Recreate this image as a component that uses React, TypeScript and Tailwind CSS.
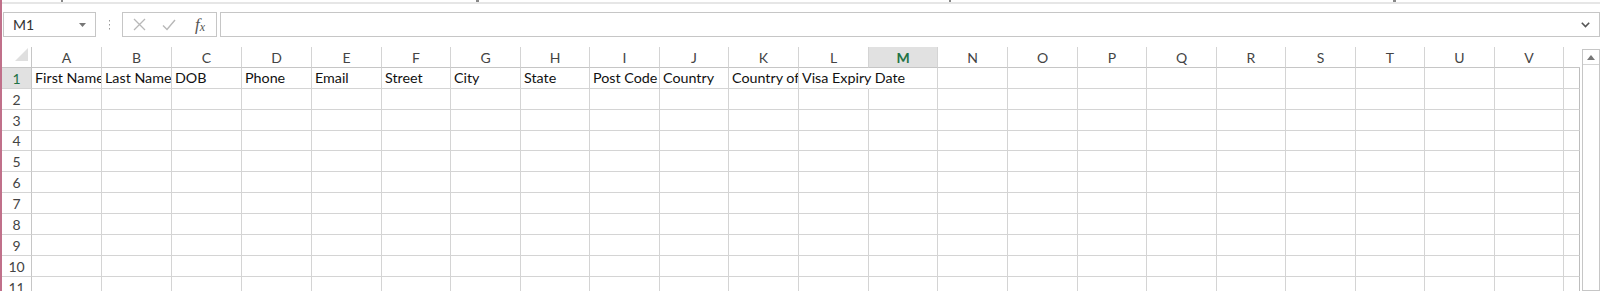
import React from "react";

const COLS = ["A","B","C","D","E","F","G","H","I","J","K","L","M","N","O","P","Q","R","S","T","U","V",""];
const ROW1: Record<string, string> = {
  A: "First Name",
  B: "Last Name",
  C: "DOB",
  D: "Phone",
  E: "Email",
  F: "Street",
  G: "City",
  H: "State",
  I: "Post Code",
  J: "Country",
  K: "Country of Birth",
  L: "Visa Expiry Date",
};
const ROWS = [1,2,3,4,5,6,7,8,9,10,11];

function ColHeader({ c }: { c: string }) {
  if (c === "") {
    return <div className="border-b border-[#c6c6c6]" />;
  }
  const sel = c === "M";
  return (
    <div
      className={
        sel
          ? "flex items-center justify-center border-r border-b border-r-[#d4d4d4] border-b-[#c6c6c6] bg-[#e1e1e1] text-[#217346] font-bold text-[14px] pt-[1px]"
          : "flex items-center justify-center border-r border-b border-r-[#d4d4d4] border-b-[#c6c6c6] text-[#444] text-[14px] pt-[1px]"
      }
    >
      {c}
    </div>
  );
}

function RowHeader({ r }: { r: number }) {
  const sel = r === 1;
  return (
    <div
      className={
        sel
          ? "flex items-center justify-center border-r border-b border-r-[#c6c6c6] border-b-[#d4d4d4] bg-[#e1e1e1] text-[#217346] text-[14px]"
          : "flex items-center justify-center border-r border-b border-r-[#c6c6c6] border-b-[#d4d4d4] text-[#444] text-[14px]"
      }
    >
      {r}
    </div>
  );
}

function Cell({ c, r }: { c: string; r: number }) {
  const text = r === 1 ? ROW1[c] : undefined;
  if (r === 1 && c === "L") {
    return (
      <div className="relative border-r border-b border-r-transparent border-b-[#d4d4d4]">
        <span className="absolute z-10 left-[3px] bottom-[1px] whitespace-nowrap text-[14.3px] leading-[18px] text-[#111]">
          {text}
        </span>
      </div>
    );
  }
  return (
    <div className="relative overflow-hidden border-r border-b border-[#d4d4d4]">
      {text && (
        <span className="absolute left-[3px] bottom-[1px] whitespace-nowrap text-[14.3px] leading-[18px] text-[#111]">
          {text}
        </span>
      )}
    </div>
  );
}

export default function App() {
  return (
    <div className="w-[1600px] h-[291px] overflow-hidden bg-white flex font-['Lato',sans-serif]">
      <div className="w-[2px] shrink-0 bg-[#c0708a]" />
      <div className="flex-1 flex flex-col min-w-0">
        {/* top strip */}
        <div className="h-[12px] shrink-0 relative">
          <div className="absolute left-[59px] top-0 w-[2px] h-[2px] bg-[#888]" />
          <div className="absolute left-[474px] top-0 w-[3px] h-[2px] bg-[#888]" />
          <div className="absolute left-[947px] top-0 w-[2px] h-[2px] bg-[#888]" />
          <div className="absolute left-[1391px] top-0 w-[3px] h-[2px] bg-[#888]" />
          <div className="mt-[2px] h-[2px] bg-[#e6e6e6]" />
        </div>
        {/* formula bar */}
        <div className="h-[25px] shrink-0 flex items-stretch">
          <div className="ml-[1px] w-[93px] border border-[#c6c6c6] flex items-center justify-between pl-[9px] pr-[9px] text-[14px] text-[#333]">
            <span>M1</span>
            <svg width="7" height="4" viewBox="0 0 7 4"><path d="M0 0 L7 0 L3.5 4 Z" fill="#777" /></svg>
          </div>
          <div className="w-[26px] flex items-center justify-center">
            <svg width="3" height="10" viewBox="0 0 3 10">
              <rect x="1" y="0" width="1" height="1.5" fill="#9a9a9a" />
              <rect x="1" y="4" width="1" height="1.5" fill="#9a9a9a" />
              <rect x="1" y="8" width="1" height="1.5" fill="#9a9a9a" />
            </svg>
          </div>
          <div className="w-[95px] border border-[#c6c6c6] flex items-center">
            <div className="w-[30px] flex justify-center ml-[1px]">
              <svg width="13" height="13" viewBox="0 0 13 13"><path d="M1 1 L12 12 M12 1 L1 12" stroke="#b8b8b8" strokeWidth="1.3" fill="none" /></svg>
            </div>
            <div className="w-[30px] flex justify-center">
              <svg width="14" height="12" viewBox="0 0 14 12"><path d="M1 6.5 L5 10.5 L13 1" stroke="#b8b8b8" strokeWidth="1.4" fill="none" /></svg>
            </div>
            <div className="w-[32px] flex justify-center font-['Liberation_Serif',serif] italic text-[#555] text-[17px] leading-none">
              <span>f</span><span className="text-[12px] mt-[5px]">x</span>
            </div>
          </div>
          <div className="ml-[3px] flex-1 border border-[#c6c6c6] flex items-center justify-end pr-[9px]">
            <svg width="9" height="6" viewBox="0 0 9 6"><path d="M0.8 0.8 L4.5 4.6 L8.2 0.8" stroke="#555" strokeWidth="1.6" fill="none" /></svg>
          </div>
        </div>
        <div className="h-[10px] shrink-0" />
        {/* sheet */}
        <div className="flex flex-1 min-h-0">
          <div className="w-[1578px] shrink-0 grid grid-cols-[30px_70px_70px_70px_70px_70px_69px_70px_69px_70px_69px_70px_70px_69px_70px_70px_69px_70px_69px_70px_69px_70px_69px_16px] grid-rows-[21px_21px_21px_21px_20px_21px_21px_21px_21px_21px_21px_21px]">
            <div className="relative border-r border-b border-[#c6c6c6]">
              <svg className="absolute right-[3px] bottom-[6px]" width="13" height="13" viewBox="0 0 13 13"><path d="M13 0 L13 13 L0 13 Z" fill="#dfdfdf" /></svg>
            </div>
            {COLS.map((c) => (
              <ColHeader key={"h" + c} c={c} />
            ))}
            {ROWS.map((r) => (
              <React.Fragment key={r}>
                <RowHeader r={r} />
                {COLS.map((c) =>
                  c === "" ? (
                    <div key={r + "w"} className="border-r border-b border-r-[#bdbdbd] border-b-[#d4d4d4]" />
                  ) : (
                    <Cell key={r + c} c={c} r={r} />
                  )
                )}
              </React.Fragment>
            ))}
          </div>
          <div className="ml-[2px] flex-1 mt-[2px] border border-[#c6c6c6] flex flex-col">
            <div className="h-[15px] border-b border-[#d4d4d4] flex items-center justify-center">
              <svg width="8" height="5" viewBox="0 0 8 5"><path d="M0 5 L4 0 L8 5 Z" fill="#777" /></svg>
            </div>
          </div>
        </div>
      </div>
    </div>
  );
}
